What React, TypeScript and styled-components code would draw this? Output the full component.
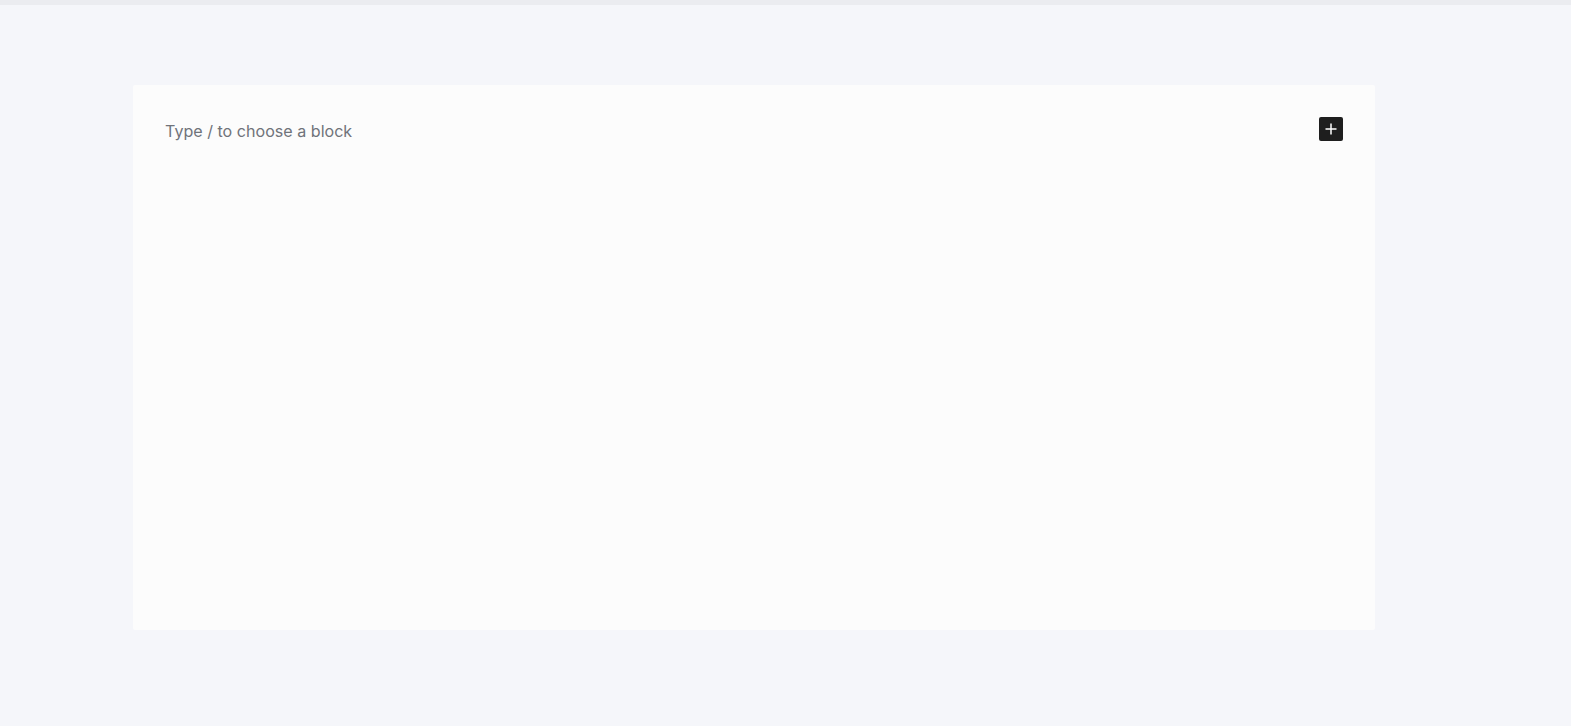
import React from 'react';
import styled, { createGlobalStyle } from 'styled-components';

const GlobalStyle = createGlobalStyle`
  html, body {
    margin: 0;
    padding: 0;
    background: #f5f6fa;
    font-family: Inter, "Noto Sans", Arial, sans-serif;
  }
`;

const Page = styled.div`
  min-height: 726px;
  display: flex;
  flex-direction: column;
`;

const TopStrip = styled.div`
  height: 5px;
  background: #ebecf0;
`;

const Canvas = styled.main`
  padding: 80px 0 0 133px;
`;

const Editor = styled.section`
  width: 1242px;
  height: 545px;
  box-sizing: border-box;
  background: #fcfcfc;
  border-radius: 2px;
  padding: 32px 32px;
`;

const BlockRow = styled.div`
  display: flex;
  align-items: center;
  justify-content: space-between;
  height: 24px;
`;

const Placeholder = styled.p`
  margin: 0;
  font-size: 16.1px;
  color: #70737a;
  position: relative;
  top: 2px;
`;

const InserterButton = styled.button`
  width: 24px;
  height: 24px;
  padding: 0;
  border: none;
  border-radius: 2px;
  background: #1e1e1e;
  display: flex;
  align-items: center;
  justify-content: center;
  cursor: pointer;
`;

export default function App() {
  return (
    <>
      <GlobalStyle />
      <Page>
        <TopStrip />
        <Canvas>
          <Editor>
            <BlockRow>
              <Placeholder>Type / to choose a block</Placeholder>
              <InserterButton aria-label="Add block">
                <svg width="14" height="14" viewBox="0 0 14 14">
                  <path d="M7 1.5v11M1.5 7h11" stroke="#fff" strokeWidth="1.5" />
                </svg>
              </InserterButton>
            </BlockRow>
          </Editor>
        </Canvas>
      </Page>
    </>
  );
}
